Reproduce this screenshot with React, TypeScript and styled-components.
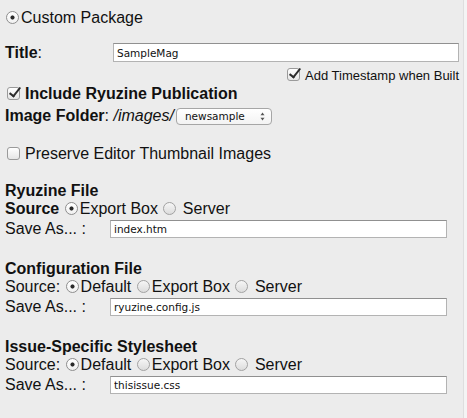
import React from "react";
import styled, { createGlobalStyle, css } from "styled-components";

//--------------Global--------------

const GlobalStyle = createGlobalStyle`
  html, body {
    margin: 0;
    padding: 0;
    background: #ececec;
  }

  body {
    font-family: "Liberation Sans", Arial, Helvetica, sans-serif;
    font-size: 16px;
    color: #111;
  }
`;

//--------------Styled Components--------------

const Panel = styled.form`
  box-sizing: border-box;
  width: 467px;
  height: 418px;
  padding: 9px 5px 0 5px;
  border-right: 3px solid #f4f4f4;
  box-shadow: inset -1px 0 0 #dedede;
  overflow: hidden;
`;

const Line = styled.div<{ $top?: number; $bold?: boolean; $size?: number; $right?: boolean }>`
  height: 18px;
  line-height: 18px;
  white-space: nowrap;
  margin-top: ${(p) => p.$top ?? 0}px;
  font-weight: ${(p) => (p.$bold ? 700 : 400)};
  font-size: ${(p) => p.$size ?? 16}px;
  text-align: ${(p) => (p.$right ? "right" : "left")};
`;

const FieldRow = styled.div<{ $top?: number; $height: number }>`
  display: flex;
  align-items: center;
  height: ${(p) => p.$height}px;
  margin-top: ${(p) => p.$top ?? 0}px;
`;

const FieldLabel = styled.label<{ $width: number }>`
  flex: none;
  width: ${(p) => p.$width}px;
  white-space: pre;
`;

const Bold = styled.b`
  font-weight: 700;
`;

const Slash = styled.i`
  font-style: italic;
`;

const TextField = styled.input<{ $width?: number; $height: number }>`
  box-sizing: border-box;
  ${(p) =>
    p.$width
      ? css`
          width: ${p.$width}px;
        `
      : css`
          flex: 1;
          min-width: 0;
        `}
  height: ${(p) => p.$height}px;
  margin: 0;
  padding: 0 3px;
  border: 1px solid #b3b3b3;
  border-top-color: #909090;
  border-radius: 0;
  background: #fff;
  color: #111;
  font-family: "DejaVu Sans", Verdana, sans-serif;
  font-size: 10.5px;
  outline: none;
`;

const Radio = styled.input.attrs({ type: "radio" })`
  appearance: none;
  box-sizing: border-box;
  display: inline-block;
  width: 13px;
  height: 13px;
  margin: 0 2px 0 1px;
  vertical-align: -1px;
  border: 1px solid #a2a2a2;
  border-radius: 50%;
  background: linear-gradient(#f6f6f6, #dcdcdc);

  &:checked {
    background: radial-gradient(circle, #2a2a2a 0 1.7px, transparent 2.4px),
      linear-gradient(#ffffff, #f1f1f1);
    border-color: #8e8e8e;
  }
`;

const Check = styled.input.attrs({ type: "checkbox" })`
  appearance: none;
  position: relative;
  box-sizing: border-box;
  display: inline-block;
  width: 13px;
  height: 13px;
  margin: 0 5px 0 2px;
  vertical-align: -1px;
  border: 1px solid #9a9a9a;
  border-radius: 3px;
  background: linear-gradient(#ffffff, #e6e6e6);

  &:checked::before {
    content: "";
    position: absolute;
    left: 4px;
    top: -3px;
    width: 4px;
    height: 10px;
    border-right: 2px solid #2b2b2b;
    border-bottom: 2px solid #2b2b2b;
    transform: rotate(38deg);
  }
`;

const SelectWrap = styled.span`
  position: relative;
  display: inline-flex;
  margin: 1px 0 0 2px;
  vertical-align: top;
`;

const FolderSelect = styled.select`
  appearance: none;
  box-sizing: border-box;
  width: 96px;
  height: 17px;
  margin: 0;
  padding: 0 0 0 8px;
  border: 1px solid #a6a6a6;
  border-radius: 4px;
  background: linear-gradient(#ffffff, #f3f3f3);
  color: #111;
  font-family: "DejaVu Sans", Verdana, sans-serif;
  font-size: 10.5px;
  line-height: 15px;
  outline: none;
`;

const Arrows = styled.svg`
  position: absolute;
  right: 7px;
  top: 4px;
  pointer-events: none;
`;

const Section = styled.section`
  margin-top: 20px;

  &:first-of-type {
    margin-top: 19px;
  }
`;

//============================================

const sections = [
  {
    id: "file",
    title: "Ryuzine File",
    source: "Source",
    boldSource: true,
    file: "index.htm",
  },
  {
    id: "config",
    title: "Configuration File",
    source: "Source:",
    boldSource: false,
    file: "ryuzine.config.js",
  },
  {
    id: "sheet",
    title: "Issue-Specific Stylesheet",
    source: "Source:",
    boldSource: false,
    file: "thisissue.css",
  },
];

function App() {
  return (
    <>
      <GlobalStyle />
      <Panel onSubmit={(e) => e.preventDefault()}>
        <Line>
          <Radio name="package" defaultChecked />
          Custom Package
        </Line>

        <FieldRow $top={15} $height={21}>
          <FieldLabel $width={108}>
            <Bold>Title</Bold>:
          </FieldLabel>
          <TextField $height={19} defaultValue="SampleMag" />
        </FieldRow>

        <Line $top={4} $size={13} $right>
          <Check defaultChecked />
          Add Timestamp when Built
        </Line>

        <Line $bold>
          <Check defaultChecked />
          Include Ryuzine Publication
        </Line>

        <Line $top={4}>
          <Bold>Image Folder</Bold>: <Slash>/images/</Slash>
          <SelectWrap>
            <FolderSelect defaultValue="newsample">
              <option value="newsample">newsample</option>
            </FolderSelect>
            <Arrows width="5" height="9" viewBox="0 0 5 9">
              <path d="M2.5 0.5 L4.5 3.2 H0.5 Z" fill="#555" />
              <path d="M2.5 8.5 L4.5 5.8 H0.5 Z" fill="#555" />
            </Arrows>
          </SelectWrap>
        </Line>

        <Line $top={20}>
          <Check />
          Preserve Editor Thumbnail Images
        </Line>

        {sections.map((s) => (
          <Section key={s.id}>
            <Line $bold>{s.title}</Line>
            {s.boldSource ? (
              <Line>
                <Bold>{s.source}</Bold> <Radio name={s.id} defaultChecked />
                Export Box <Radio name={s.id} /> Server
              </Line>
            ) : (
              <Line>
                {s.source} <Radio name={s.id} defaultChecked />
                Default <Radio name={s.id} />
                Export Box <Radio name={s.id} /> Server
              </Line>
            )}
            <FieldRow $height={22}>
              <FieldLabel $width={105}>Save As... :</FieldLabel>
              <TextField $width={337} $height={18} defaultValue={s.file} />
            </FieldRow>
          </Section>
        ))}
      </Panel>
    </>
  );
}

export default App;
